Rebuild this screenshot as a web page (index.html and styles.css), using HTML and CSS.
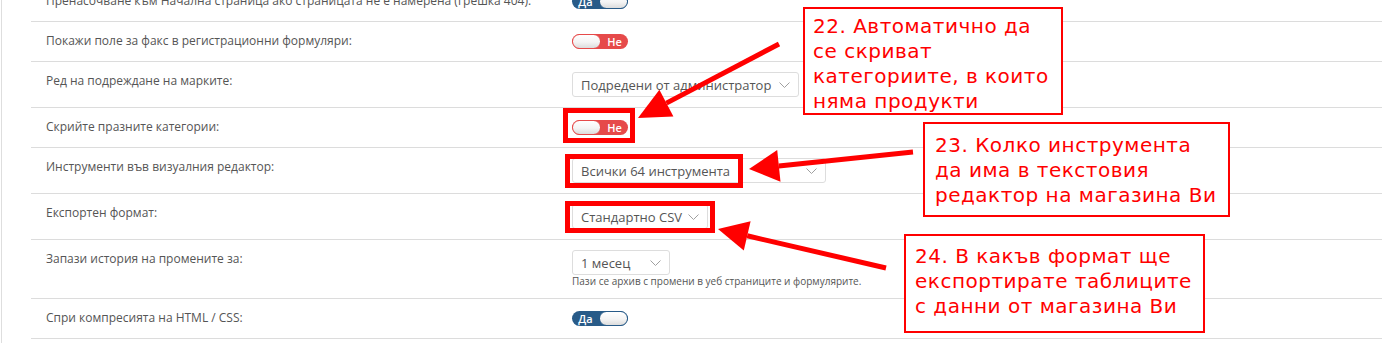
FILE: index.html
```html
<!DOCTYPE html>
<html lang="bg">
<head>
<meta charset="utf-8">
<title>Настройки</title>
<link rel="stylesheet" href="styles.css">
</head>
<body>
<div class="page">
  <div class="settings">
    <div class="row">
      <div class="label">Пренасочване към Начална страница ако страницата не е намерена (грешка 404):</div>
      <div class="ctrl"><span class="toggle on"><span class="txt">Да</span><span class="knob"></span></span></div>
    </div>
    <div class="row">
      <div class="label">Покажи поле за факс в регистрационни формуляри:</div>
      <div class="ctrl"><span class="toggle off"><span class="knob"></span><span class="txt">Не</span></span></div>
    </div>
    <div class="row">
      <div class="label">Ред на подреждане на марките:</div>
      <div class="ctrl"><span class="select w-admin"><span>Подредени от администратор</span><svg class="chev" width="11" height="6" viewBox="0 0 11 6"><polyline points="0.5,0.5 5.5,5.5 10.5,0.5"/></svg></span></div>
    </div>
    <div class="row">
      <div class="label">Скрийте празните категории:</div>
      <div class="ctrl"><span class="toggle off"><span class="knob"></span><span class="txt">Не</span></span></div>
    </div>
    <div class="row">
      <div class="label">Инструменти във визуалния редактор:</div>
      <div class="ctrl"><span class="select w-tools"><span>Всички 64 инструмента</span><svg class="chev" width="11" height="6" viewBox="0 0 11 6"><polyline points="0.5,0.5 5.5,5.5 10.5,0.5"/></svg></span></div>
    </div>
    <div class="row">
      <div class="label">Експортен формат:</div>
      <div class="ctrl"><span class="select w-csv"><span>Стандартно CSV</span><svg class="chev" width="11" height="6" viewBox="0 0 11 6"><polyline points="0.5,0.5 5.5,5.5 10.5,0.5"/></svg></span></div>
    </div>
    <div class="row">
      <div class="label">Запази история на промените за:</div>
      <div class="ctrl">
        <span class="select w-month"><span>1 месец</span><svg class="chev" width="11" height="6" viewBox="0 0 11 6"><polyline points="0.5,0.5 5.5,5.5 10.5,0.5"/></svg></span>
        <div class="note">Пази се архив с промени в уеб страниците и формулярите.</div>
      </div>
    </div>
    <div class="row">
      <div class="label">Спри компресията на HTML / CSS:</div>
      <div class="ctrl"><span class="toggle on"><span class="txt">Да</span><span class="knob"></span></span></div>
    </div>
  </div>

  <svg class="annot" width="1382" height="343" viewBox="0 0 1382 343">
    <g fill="none" stroke="#ff0000" stroke-width="5">
      <rect x="565.5" y="110.5" width="67" height="30"/>
      <rect x="567.5" y="156.5" width="173" height="29"/>
      <rect x="567.5" y="203.5" width="145" height="27"/>
      <line x1="779" y1="44" x2="666.4" y2="103.1"/>
      <line x1="913" y1="152" x2="778.8" y2="165.9"/>
      <line x1="886" y1="268" x2="747.2" y2="235.8"/>
    </g>
    <g fill="#ff0000">
      <polygon points="638,118 673.4,116.4 659.4,89.8"/>
      <polygon points="749,169 780.5,181.8 777.2,150"/>
      <polygon points="718,229 743.8,250.4 750.6,221.2"/>
    </g>
  </svg>

  <div class="callout c22">22. Автоматично да<br>се скриват<br>категориите, в които<br>няма продукти</div>
  <div class="callout c23">23. Колко инструмента<br>да има в текстовия<br>редактор на магазина Ви</div>
  <div class="callout c24">24. В какъв формат ще<br>експортирате таблиците<br>с данни от магазина Ви</div>
</div>
</body>
</html>
```

FILE: styles.css
```css
html, body {
  margin: 0;
  padding: 0;
  background: #fff;
}

.page {
  position: relative;
  width: 1380px;
  height: 343px;
  margin-left: 1px;
  border-left: 1px solid #dedede;
  overflow: hidden;
  font-family: "Open Sans", "Liberation Sans", sans-serif;
  color: #555;
}

.settings {
  margin-top: -18px;
  padding-left: 29px;
}

.row {
  display: grid;
  grid-template-columns: 526px 1fr;
  align-items: start;
  padding: 10px 0 10px 15px;
  border-bottom: 1px solid #dcdcdc;
}

.label {
  margin-top: 1px;
  font-size: 12px;
  line-height: 16px;
  color: #555;
  white-space: nowrap;
}

.ctrl {
  display: flex;
  flex-direction: column;
  align-items: flex-start;
  min-height: 19px;
}

.toggle {
  display: flex;
  align-items: center;
  box-sizing: border-box;
  width: 56px;
  height: 15px;
  margin-top: 2px;
  border-radius: 8px;
  overflow: hidden;
}

.toggle .txt {
  flex: 1;
  text-align: center;
  color: #fff;
  font-size: 11px;
  font-weight: 600;
  line-height: 15px;
}

.toggle .knob {
  box-sizing: border-box;
  width: 29px;
  height: 15px;
  border-radius: 8px;
  background: linear-gradient(#ffffff 0%, #f4f4f4 55%, #dcdcdc 100%);
}

.toggle.on {
  background: #285b88;
}

.toggle.on .knob {
  border: 1px solid #285b88;
}

.toggle.off {
  background: #e64a4a;
}

.toggle.off .knob {
  border: 1px solid #e64a4a;
}

.select {
  display: flex;
  align-items: center;
  justify-content: space-between;
  box-sizing: border-box;
  height: 25px;
  padding: 0 8px 0 8px;
  border: 1px solid #dddddd;
  border-radius: 3px;
  background: #fff;
  font-size: 13px;
  line-height: 18px;
  color: #555;
  white-space: nowrap;
}

.chev {
  display: block;
  flex: none;
}

.chev polyline {
  fill: none;
  stroke: #a0a0a0;
  stroke-width: 1;
}

.w-admin { width: 227px; }
.w-tools { width: 254px; }
.w-csv { width: 136px; }
.w-month { width: 98px; }

.note {
  font-size: 10px;
  line-height: 13px;
  color: #555;
  white-space: nowrap;
}

.annot {
  position: absolute;
  left: -2px;
  top: 0;
  pointer-events: none;
}

.callout {
  position: absolute;
  box-sizing: border-box;
  border: 2px solid #ff0000;
  background: #fff;
  color: #ff0000;
  font-family: "DejaVu Sans", "Liberation Sans", sans-serif;
  font-size: 20px;
  letter-spacing: 0.5px;
  line-height: 25px;
  white-space: nowrap;
}

.c22 {
  left: 801px;
  top: 7px;
  width: 260px;
  height: 108px;
  padding: 5px 0 0 8px;
}

.c23 {
  left: 921px;
  top: 122px;
  width: 307px;
  height: 95px;
  padding: 9px 0 0 10px;
}

.c24 {
  left: 902px;
  top: 234px;
  width: 301px;
  height: 99px;
  padding: 8px 0 0 9px;
}
```
